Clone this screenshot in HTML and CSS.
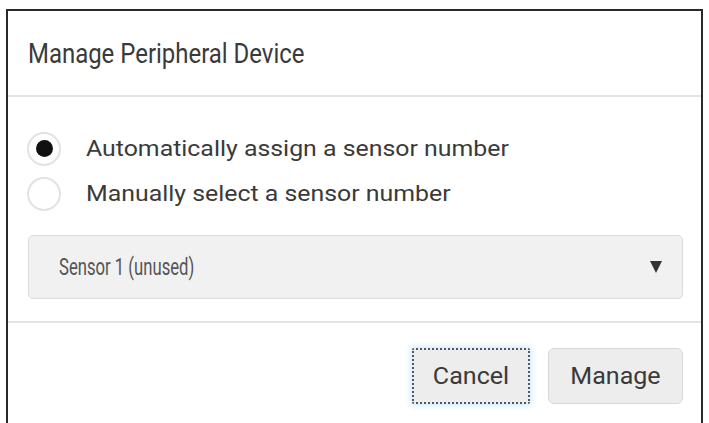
FILE: index.html
```html
<!DOCTYPE html>
<html>
<head>
<meta charset="utf-8">
<link rel="stylesheet" href="styles.css">
</head>
<body>
<div class="dialog">
  <div class="header"><h1 class="title"><span class="title-text">Manage Peripheral Device</span></h1></div>
  <div class="body">
    <label class="option"><span class="radio checked"><span class="dot"></span></span><span class="label">Automatically assign a sensor number</span></label>
    <label class="option"><span class="radio"></span><span class="label">Manually select a sensor number</span></label>
    <div class="select"><span class="select-text">Sensor 1 (unused)</span><span class="arrow"></span></div>
  </div>
  <div class="footer">
    <button class="btn focused"><span class="btn-text">Cancel</span></button>
    <button class="btn"><span class="btn-text">Manage</span></button>
  </div>
</div>
</body>
</html>
```
FILE: styles.css
```css
html, body { margin: 0; padding: 0; background: #fff; }
body { font-family: Roboto, "Liberation Sans", sans-serif; color: #333; overflow: hidden; }
.dialog {
  margin: 9px 0 0 6px;
  width: 697px;
  height: 420px;
  border: 2px solid #2a2a2a;
  border-bottom: none;
  box-sizing: border-box;
  display: flex;
  flex-direction: column;
}
.header {
  height: 86px;
  border-bottom: 2px solid #e4e4e4;
  display: flex;
  align-items: center;
  padding-left: 20px;
  box-sizing: border-box;
}
.title { margin: 0; font-size: 28px; font-weight: 400; color: #3a3a3a; }
.title-text { display: inline-block; transform: scaleX(0.855); transform-origin: left center; white-space: nowrap; }
.body {
  padding: 29px 18px 0 20px;
  height: 226px;
  box-sizing: border-box;
  border-bottom: 2px solid #e4e4e4;
}
.option { display: flex; align-items: center; height: 45px; }
.radio {
  width: 34px; height: 34px; border-radius: 50%;
  border: 2px solid #e2e2e2; box-sizing: border-box;
  display: flex; align-items: center; justify-content: center;
  margin-right: 25px; background: #fff;
  margin-left: -1px;
  flex: none;
}
.radio .dot { width: 17px; height: 17px; border-radius: 50%; background: #111; }
.label { display: inline-block; font-size: 22px; color: #3a3a3a; transform: scaleX(1.13); transform-origin: left center; white-space: nowrap; }
.select {
  margin-top: 19px;
  height: 62px;
  border: 1px solid #dcdcdc;
  border-radius: 5px;
  background: #f1f1f1;
  display: flex; align-items: center; justify-content: space-between;
  padding: 0 20px 0 30px;
}
.select-text { display: inline-block; font-size: 23px; color: #555; transform: scaleX(0.725); transform-origin: left center; white-space: nowrap; }
.arrow {
  width: 0; height: 0;
  border-left: 6px solid transparent; border-right: 6px solid transparent;
  border-top: 12px solid #333;
}
.footer {
  display: flex; justify-content: flex-end; gap: 18px;
  padding: 25px 18px 0 0;
}
.btn {
  font-family: Roboto, "Liberation Sans", sans-serif;
  font-size: 23px; color: #3a3a3a;
  height: 56px; width: 135px; padding: 0;
  background: #ededed; border: 1px solid #d8d8d8; border-radius: 6px;
}
.btn-text { display: inline-block; transform: scaleX(1.09); }
.btn.focused {
  width: 118px;
  border: 2px dotted #4a5a70; border-radius: 2px;
  box-shadow: 0 0 6px 2px #d6ecf8;
}
```
